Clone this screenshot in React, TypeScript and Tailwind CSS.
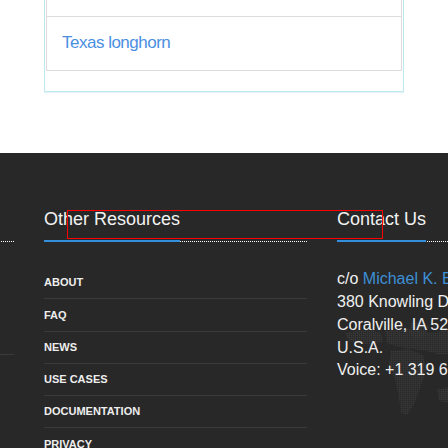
import React from "react";

const links = ["About", "FAQ", "News", "Use Cases", "Documentation", "Privacy"];

const address = [
  "380 Knowling Drive",
  "Coralville, IA 52241",
  "U.S.A.",
  "Voice: +1 319 626 6000",
];

function Heading({ title }: { title: string }) {
  return (
    <div className="flex border-b border-dotted border-white">
      <span className="-mb-px border-b-2 border-[#3490dc] pb-[10px] text-[18px] leading-[21px] text-[#f2f2f2]">
        {title}
      </span>
    </div>
  );
}

// faint dotted world map behind the contact block
function WorldMap() {
  return (
    <svg width="120" height="130" viewBox="0 0 120 130" className="absolute left-0 top-[110px]">
      <defs>
        <pattern id="dots" width="2" height="2" patternUnits="userSpaceOnUse">
          <rect width="1.3" height="1.3" fill="#3a3a3a" />
        </pattern>
      </defs>
      <path d="M8 14 L30 10 L44 14 L46 22 L36 26 L22 24 L12 22 Z" fill="url(#dots)" />
      <path d="M74 4 L86 2 L92 8 L88 18 L78 20 L72 12 Z" fill="url(#dots)" />
      <path d="M48 12 L70 10 L96 14 L112 10 L120 12 L120 34 L104 36 L90 32 L76 30 L62 28 L50 24 Z" fill="url(#dots)" />
      <path d="M54 32 L72 30 L86 36 L90 50 L84 66 L78 84 L70 96 L64 94 L62 78 L58 60 L52 46 Z" fill="url(#dots)" />
      <path d="M100 70 L112 68 L118 76 L112 84 L102 82 Z" fill="url(#dots)" />
    </svg>
  );
}

export default function App() {
  return (
    <div className="h-[448px] overflow-hidden bg-white font-['Liberation_Sans',Arial,sans-serif]">
      <div className="h-[153px] overflow-hidden">
        <div className="ml-[44px] mt-[-30px] w-[360px] border border-[#bce8f1] p-px pb-[20px] shadow-[0_1px_0_#e4f4f8]">
          <div className="border-x border-[#dddddd]">
            <div className="h-[45px] border-b border-[#dddddd]" />
            <div className="h-[54px] border-b border-[#dddddd] pl-[15px] pt-[14px]">
              <span className="text-[17px] leading-[20px] tracking-[-0.5px] text-[#4b8fdf]">
                Texas longhorn
              </span>
            </div>
          </div>
        </div>
      </div>

      <footer className="relative h-[295px] overflow-hidden bg-[#282828]">
        <div className="flex gap-[30px] pt-[56px]">
          <div className="ml-[-186px] w-[200px] shrink-0">
            <div className="h-[33px] border-b border-dotted border-white" />
            <div className="h-[113px] border-b border-[#3a3a3a]" />
          </div>

          <div className="w-[263px] shrink-0">
            <Heading title="Other Resources" />
            <ul className="mt-[25px]">
              {links.map((l) => (
                <li
                  key={l}
                  className="flex h-[32.25px] items-center border-b border-[#3a3a3a] text-[11px] font-bold uppercase text-[#eeeeee]"
                >
                  {l}
                </li>
              ))}
            </ul>
          </div>

          <div className="relative w-[263px] shrink-0">
            <Heading title="Contact Us" />
            <WorldMap />
            <div className="relative mt-[26px] whitespace-nowrap text-[16px] leading-[22.86px] text-[#f0f0f0]">
              <div>
                c/o <span className="text-[#3d8fd6]">Michael K. Bowen</span>
              </div>
              {address.map((a) => (
                <div key={a}>{a}</div>
              ))}
            </div>
          </div>
        </div>

        <div className="absolute left-[67px] top-[57px] h-[29px] w-[316px] border border-[#ff0000]" />
      </footer>
    </div>
  );
}
